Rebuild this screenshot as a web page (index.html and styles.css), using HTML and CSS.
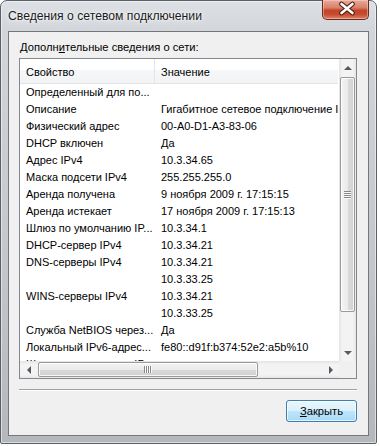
FILE: index.html
```html
<!DOCTYPE html>
<html lang="ru">
<head>
    <meta charset="UTF-8">
    <title>Сведения о сетевом подключении</title>
    <link rel="stylesheet" href="styles.css">
</head>
<body>
    <div class="window">
        <div class="title-bar">
            <span class="title">Сведения о сетевом подключении</span>
            <div class="close-button">
                <svg width="47" height="19" viewBox="0 0 47 19">
                    <path d="M18.5 5 L29.5 14 M29.5 5 L18.5 14" stroke="#4a1a10" stroke-width="4.8" stroke-linecap="round" fill="none"/>
                    <path d="M18.5 5 L29.5 14 M29.5 5 L18.5 14" stroke="#fff" stroke-width="2.6" stroke-linecap="round" fill="none"/>
                </svg>
            </div>
        </div>

        <div class="client">
            <div class="details-label">Дополн<u>и</u>тельные сведения о сети:</div>

            <div class="list-box">
                <div class="list-view">
                    <div class="list-header">
                        <div class="col-name">Свойство</div>
                        <div class="col-value">Значение</div>
                    </div>
                    <div class="list-row"><div class="col-name">Определенный для по...</div><div class="col-value"></div></div>
                    <div class="list-row"><div class="col-name">Описание</div><div class="col-value">Гигабитное сетевое подключение Intel(R) PRO/1000 MT</div></div>
                    <div class="list-row"><div class="col-name">Физический адрес</div><div class="col-value">00-A0-D1-A3-83-06</div></div>
                    <div class="list-row"><div class="col-name">DHCP включен</div><div class="col-value">Да</div></div>
                    <div class="list-row"><div class="col-name">Адрес IPv4</div><div class="col-value">10.3.34.65</div></div>
                    <div class="list-row"><div class="col-name">Маска подсети IPv4</div><div class="col-value">255.255.255.0</div></div>
                    <div class="list-row"><div class="col-name">Аренда получена</div><div class="col-value">9 ноября 2009 г. 17:15:15</div></div>
                    <div class="list-row"><div class="col-name">Аренда истекает</div><div class="col-value">17 ноября 2009 г. 17:15:13</div></div>
                    <div class="list-row"><div class="col-name">Шлюз по умолчанию IP...</div><div class="col-value">10.3.34.1</div></div>
                    <div class="list-row"><div class="col-name">DHCP-сервер IPv4</div><div class="col-value">10.3.34.21</div></div>
                    <div class="list-row"><div class="col-name">DNS-серверы IPv4</div><div class="col-value">10.3.34.21</div></div>
                    <div class="list-row"><div class="col-name"></div><div class="col-value">10.3.33.25</div></div>
                    <div class="list-row"><div class="col-name">WINS-серверы IPv4</div><div class="col-value">10.3.34.21</div></div>
                    <div class="list-row"><div class="col-name"></div><div class="col-value">10.3.33.25</div></div>
                    <div class="list-row"><div class="col-name">Служба NetBIOS через...</div><div class="col-value">Да</div></div>
                    <div class="list-row"><div class="col-name">Локальный IPv6-адрес...</div><div class="col-value">fe80::d91f:b374:52e2:a5b%10</div></div>
                    <div class="list-row"><div class="col-name">Шлюз по умолчанию IP...</div><div class="col-value"></div></div>
                </div>

                <div class="v-scroll">
                    <div class="scroll-btn"><i class="arrow arrow-up"></i></div>
                    <div class="scroll-track">
                        <div class="scroll-thumb"><i class="grip"></i></div>
                    </div>
                    <div class="scroll-btn"><i class="arrow arrow-down"></i></div>
                </div>

                <div class="h-scroll">
                    <div class="scroll-btn"><i class="arrow arrow-left"></i></div>
                    <div class="scroll-track">
                        <div class="scroll-thumb"><i class="grip"></i></div>
                    </div>
                    <div class="scroll-btn"><i class="arrow arrow-right"></i></div>
                </div>

                <div class="scroll-corner"></div>
            </div>

            <div class="separator"></div>

            <div class="button-row">
                <button class="close-dialog"><u>З</u>акрыть</button>
            </div>
        </div>
    </div>
</body>
</html>
```

FILE: styles.css
```css
:root {
    --face: #f0f0f0;
    --list-border: #828790;
    --arrow: #555a60;
    --text: #000;
}

body {
    margin: 0;
    padding: 0;
    background: #fff;
    font-family: "Liberation Sans", Arial, sans-serif;
    font-size: 11.2px;
    color: var(--text);
}

/* Window frame */
.window {
    width: 377px;
    height: 444px;
    box-sizing: border-box;
    border: 1px solid #5b6066;
    border-radius: 7px 7px 2px 2px;
    padding: 0 7px 7px 7px;
    display: flex;
    flex-direction: column;
    background: linear-gradient(to bottom, #dde1e5 0, #d2d6db 30px, #c3c7cc 60%, #b4b8bd 100%);
    box-shadow: inset 0 0 0 1px rgba(255, 255, 255, 0.5);
}

.title-bar {
    height: 30px;
    display: flex;
    align-items: flex-start;
}

.title {
    margin-top: 8px;
    font-size: 12.2px;
    color: #1b1b1b;
    text-shadow: 0 0 6px #fff, 0 0 3px #fff;
}

.close-button {
    margin-left: auto;
    margin-top: -1px;
    width: 47px;
    height: 20px;
    box-sizing: border-box;
    border: 1px solid #6a2a1d;
    border-top: none;
    border-radius: 0 0 5px 5px;
    background: linear-gradient(to bottom, #e9ab9b 0%, #d9806b 40%, #c2452b 55%, #c54a30 75%, #de8367 100%);
    box-shadow: inset 0 0 0 1px rgba(255, 220, 210, 0.45);
}

.close-button svg {
    display: block;
    margin-top: -1px;
}

/* Client area */
.client {
    flex: 1;
    border: 1px solid #73777c;
    background: var(--face);
    padding: 8px 11px 0 10px;
    display: flex;
    flex-direction: column;
}

.details-label {
    height: 15px;
    line-height: 15px;
    margin-left: 1px;
    margin-bottom: 3px;
}

/* List view */
.list-box {
    height: 321px;
    box-sizing: border-box;
    border: 1px solid var(--list-border);
    background: #fff;
    display: grid;
    grid-template-columns: 1fr 17px;
    grid-template-rows: 1fr 17px;
}

.list-view {
    overflow: hidden;
    white-space: nowrap;
    font-size: 11px;
}

.list-header,
.list-row {
    display: flex;
}

.list-header {
    height: 25px;
    box-sizing: border-box;
    border-bottom: 1px solid #e3e4e6;
    background: linear-gradient(to bottom, #fff 0, #fff 45%, #f6f7f9 46%, #f2f3f5 100%);
    line-height: 26px;
    margin-right: 1px;
}

.list-header .col-name {
    border-right: 1px solid #e3e5e8;
}

.list-row {
    height: 17px;
    line-height: 17px;
}

.col-name {
    width: 135px;
    flex: none;
    box-sizing: border-box;
    padding-left: 6px;
    overflow: hidden;
}

.col-value {
    padding-left: 6px;
}

/* Scroll bars */
.v-scroll,
.h-scroll {
    display: flex;
    background: linear-gradient(to right, #e4e4e4, #f3f3f3 20%, #f3f3f3 80%, #e6e6e6);
}

.v-scroll {
    flex-direction: column;
}

.h-scroll {
    background: linear-gradient(to bottom, #e4e4e4, #f3f3f3 20%, #f3f3f3 80%, #e6e6e6);
}

.scroll-btn {
    width: 17px;
    height: 17px;
    flex: none;
    display: flex;
    align-items: center;
    justify-content: center;
}

.scroll-track {
    flex: 1;
    display: flex;
}

.v-scroll .scroll-track {
    flex-direction: column;
    padding: 1px 1px 0 1px;
}

.h-scroll .scroll-track {
    padding: 1px 0 1px 1px;
}

.scroll-thumb {
    box-sizing: border-box;
    border: 1px solid #9a9a9a;
    border-radius: 2px;
    display: flex;
    align-items: center;
    justify-content: center;
    box-shadow: inset 0 0 0 1px rgba(255, 255, 255, 0.8);
}

.v-scroll .scroll-thumb {
    height: 235px;
    background: linear-gradient(to right, #f4f4f4, #eaeaea 50%, #dadada 51%, #d2d2d2);
}

.h-scroll .scroll-thumb {
    width: 220px;
    background: linear-gradient(to bottom, #f4f4f4, #eaeaea 50%, #dadada 51%, #d2d2d2);
}

.grip {
    display: block;
}

.v-scroll .grip {
    width: 7px;
    height: 8px;
    background: repeating-linear-gradient(to bottom, #888 0, #888 1px, #fafafa 1px, #fafafa 2px);
}

.h-scroll .grip {
    width: 8px;
    height: 7px;
    background: repeating-linear-gradient(to right, #888 0, #888 1px, #fafafa 1px, #fafafa 2px);
}

.arrow {
    width: 0;
    height: 0;
    display: block;
}

.arrow-up {
    border-left: 4px solid transparent;
    border-right: 4px solid transparent;
    border-bottom: 4px solid var(--arrow);
}

.arrow-down {
    border-left: 4px solid transparent;
    border-right: 4px solid transparent;
    border-top: 4px solid var(--arrow);
}

.arrow-left {
    border-top: 4px solid transparent;
    border-bottom: 4px solid transparent;
    border-right: 4px solid var(--arrow);
}

.arrow-right {
    border-top: 4px solid transparent;
    border-bottom: 4px solid transparent;
    border-left: 4px solid var(--arrow);
}

.scroll-corner {
    background: var(--face);
}

/* Bottom part */
.separator {
    margin-top: 10px;
    height: 1px;
    background: #a0a0a0;
    border-bottom: 1px solid #fff;
}

.button-row {
    display: flex;
    justify-content: flex-end;
    margin-top: 9px;
}

.close-dialog {
    width: 71px;
    height: 22px;
    padding: 0;
    font-family: inherit;
    font-size: 11.2px;
    color: var(--text);
    border: 1px solid #3c7fb1;
    border-radius: 3px;
    background: linear-gradient(to bottom, #eaf6fd 0%, #d9f0fc 50%, #bee6fd 51%, #a7d9f5 100%);
    box-shadow: inset 0 0 0 1px rgba(255, 255, 255, 0.7);
}
```
